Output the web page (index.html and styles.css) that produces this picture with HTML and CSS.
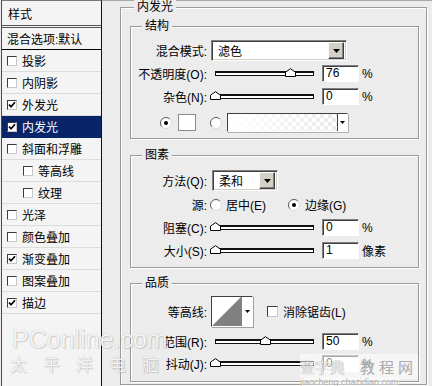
FILE: index.html
```html
<!DOCTYPE html>
<html>
<head>
<meta charset="utf-8">
<link rel="stylesheet" href="styles.css">
</head>
<body>
<div class="dialog">
  <div class="list">
    <div class="list-head">样式</div>
    <div class="list-blend">混合选项:默认</div>
    <div class="item"><span class="cb"></span>投影</div>
    <div class="item"><span class="cb"></span>内阴影</div>
    <div class="item"><span class="cb"><svg class="chk" width="8" height="8" viewBox="0 0 8 8"><path d="M1 3.5 L3 5.8 L7 1.2"/></svg></span>外发光</div>
    <div class="item sel"><span class="cb"><svg class="chk" width="8" height="8" viewBox="0 0 8 8"><path d="M1 3.5 L3 5.8 L7 1.2"/></svg></span>内发光</div>
    <div class="item"><span class="cb"></span>斜面和浮雕</div>
    <div class="item sub"><span class="cb"></span>等高线</div>
    <div class="item sub"><span class="cb"></span>纹理</div>
    <div class="item"><span class="cb"></span>光泽</div>
    <div class="item"><span class="cb"></span>颜色叠加</div>
    <div class="item"><span class="cb"><svg class="chk" width="8" height="8" viewBox="0 0 8 8"><path d="M1 3.5 L3 5.8 L7 1.2"/></svg></span>渐变叠加</div>
    <div class="item"><span class="cb"></span>图案叠加</div>
    <div class="item"><span class="cb"><svg class="chk" width="8" height="8" viewBox="0 0 8 8"><path d="M1 3.5 L3 5.8 L7 1.2"/></svg></span>描边</div>
  </div>

  <div class="main">
    <div class="group outer">
      <div class="title t-outer">内发光</div>

      <div class="group inner g-struct">
        <div class="title">结构</div>
        <div class="row r-sel1">
          <span class="lbl">混合模式:</span>
          <div class="select s-blend"><span class="val">滤色</span><span class="btn"><svg width="7" height="4" viewBox="0 0 7 4"><path d="M0 0H7L3.5 4Z"/></svg></span></div>
        </div>
        <div class="row r-s1">
          <span class="lbl">不透明度(O):</span>
          <div class="slider"><div class="track"></div><svg class="thumb" style="left:calc(76% - 5px)" width="11" height="9" viewBox="0 0 11 9"><path d="M0.5 8.5V4.2L5.5 0.7L10.5 4.2V8.5Z"/></svg></div>
          <div class="num">76</div><span class="unit">%</span>
        </div>
        <div class="row r-s2">
          <span class="lbl">杂色(N):</span>
          <div class="slider"><div class="track"></div><svg class="thumb" style="left:calc(0% - 5px)" width="11" height="9" viewBox="0 0 11 9"><path d="M0.5 8.5V4.2L5.5 0.7L10.5 4.2V8.5Z"/></svg></div>
          <div class="num">0</div><span class="unit">%</span>
        </div>
        <div class="row r-color">
          <svg class="radio rd-first" width="12" height="12" viewBox="0 0 12 12"><circle cx="6" cy="6" r="5.5" fill="#fff"/><path class="dk" d="M2.1 9.9A5.5 5.5 0 0 1 9.9 2.1"/><path class="lt" d="M9.9 2.1A5.5 5.5 0 0 1 2.1 9.9"/><circle cx="6" cy="6" r="2" fill="#000"/></svg>
          <div class="swatch"></div>
          <svg class="radio rd-second" width="12" height="12" viewBox="0 0 12 12"><circle cx="6" cy="6" r="5.5" fill="#fff"/><path class="dk" d="M2.1 9.9A5.5 5.5 0 0 1 9.9 2.1"/><path class="lt" d="M9.9 2.1A5.5 5.5 0 0 1 2.1 9.9"/></svg>
          <div class="grad"><div class="grad-fill"></div><div class="grad-arrow"><svg width="5" height="3" viewBox="0 0 5 3"><path d="M0 0H5L2.5 3Z"/></svg></div></div>
        </div>
      </div>

      <div class="group inner g-elem">
        <div class="title">图素</div>
        <div class="row r-sel2">
          <span class="lbl">方法(Q):</span>
          <div class="select s-method"><span class="val">柔和</span><span class="btn"><svg width="7" height="4" viewBox="0 0 7 4"><path d="M0 0H7L3.5 4Z"/></svg></span></div>
        </div>
        <div class="row r-src">
          <span class="lbl">源:</span>
          <label class="opt opt1"><svg class="radio" width="12" height="12" viewBox="0 0 12 12"><circle cx="6" cy="6" r="5.5" fill="#fff"/><path class="dk" d="M2.1 9.9A5.5 5.5 0 0 1 9.9 2.1"/><path class="lt" d="M9.9 2.1A5.5 5.5 0 0 1 2.1 9.9"/></svg>居中(E)</label>
          <label class="opt opt2"><svg class="radio" width="12" height="12" viewBox="0 0 12 12"><circle cx="6" cy="6" r="5.5" fill="#fff"/><path class="dk" d="M2.1 9.9A5.5 5.5 0 0 1 9.9 2.1"/><path class="lt" d="M9.9 2.1A5.5 5.5 0 0 1 2.1 9.9"/><circle cx="6" cy="6" r="2" fill="#000"/></svg>边缘(G)</label>
        </div>
        <div class="row r-s3">
          <span class="lbl">阻塞(C):</span>
          <div class="slider"><div class="track"></div><svg class="thumb" style="left:calc(0% - 5px)" width="11" height="9" viewBox="0 0 11 9"><path d="M0.5 8.5V4.2L5.5 0.7L10.5 4.2V8.5Z"/></svg></div>
          <div class="num">0</div><span class="unit">%</span>
        </div>
        <div class="row r-s4">
          <span class="lbl">大小(S):</span>
          <div class="slider"><div class="track"></div><svg class="thumb" style="left:calc(0% - 5px)" width="11" height="9" viewBox="0 0 11 9"><path d="M0.5 8.5V4.2L5.5 0.7L10.5 4.2V8.5Z"/></svg></div>
          <div class="num">1</div><span class="unit">像素</span>
        </div>
      </div>

      <div class="group inner g-qual">
        <div class="title">品质</div>
        <div class="row r-contour">
          <span class="lbl">等高线:</span>
          <div class="contour"><svg class="preview" width="29" height="29" viewBox="0 0 29 29"><polygon points="0,29 29,0 29,29" fill="#808080"/></svg><div class="c-arrow"><svg width="5" height="3" viewBox="0 0 5 3"><path d="M0 0H5L2.5 3Z"/></svg></div></div>
          <span class="cb cb-aa"></span><span class="aa-text">消除锯齿(L)</span>
        </div>
        <div class="row r-s5">
          <span class="lbl">范围(R):</span>
          <div class="slider"><div class="track"></div><svg class="thumb" style="left:calc(50% - 5px)" width="11" height="9" viewBox="0 0 11 9"><path d="M0.5 8.5V4.2L5.5 0.7L10.5 4.2V8.5Z"/></svg></div>
          <div class="num">50</div><span class="unit">%</span>
        </div>
        <div class="row r-s6">
          <span class="lbl">抖动(J):</span>
          <div class="slider"><div class="track"></div><svg class="thumb" style="left:calc(0% - 5px)" width="11" height="9" viewBox="0 0 11 9"><path d="M0.5 8.5V4.2L5.5 0.7L10.5 4.2V8.5Z"/></svg></div>
          <div class="num">0</div><span class="unit">%</span>
        </div>
      </div>
    </div>
  </div>

  <div class="wm-pc">PConline.com</div>
  <div class="wm-pc-cn">太平洋电脑</div>
  <div class="wm-cz"><span class="cz1">查字典</span><span class="cz2">教程网</span></div>
  <div class="wm-url">jiaocheng.chazidian.com</div>
</div>
</body>
</html>
```

FILE: styles.css
```css
* { box-sizing: border-box; }
html, body { margin: 0; padding: 0; }
body {
  width: 432px;
  height: 386px;
  overflow: hidden;
  background: #ececec;
  font-family: "Liberation Sans", "Noto Sans CJK SC", sans-serif;
  font-size: 12px;
  color: #000;
}
.dialog { position: relative; display: flex; height: 386px; overflow: hidden; }

/* ---------- style list ---------- */
.list {
  flex: none;
  width: 101px;
  margin-left: 1px;
  height: 386px;
  background: #f4f4f4;
  border-left: 1px solid #4a4a4a;
  border-right: 1px solid #111;
  border-top: 1px solid #777;
}
.list-head {
  height: 27px;
  padding-left: 6px;
  display: flex;
  align-items: center;
  border-bottom: 3px double #555;
}
.list-blend {
  height: 22px;
  padding-left: 5px;
  display: flex;
  align-items: center;
  border-bottom: 1px solid #000;
}
.item {
  height: 22px;
  display: flex;
  align-items: center;
  gap: 5px;
  padding-left: 5px;
  border-bottom: 1px solid #dcdcdc;
}
.item.sub { padding-left: 21px; }
.item.sel { background: #0a246a; color: #fff; border-bottom-color: #0a246a; }

.cb {
  flex: none;
  width: 10px;
  height: 10px;
  background: #fff;
  border: 1px solid;
  border-color: #3c3c3c #c8c8c8 #c8c8c8 #3c3c3c;
  display: flex;
  align-items: center;
  justify-content: center;
}
.chk path { fill: none; stroke: #000; stroke-width: 1.7; }

/* ---------- right side ---------- */
.main {
  flex: 1;
  height: 386px;
  border-top: 1px solid #a8a8a8;
  padding: 6px 5px 0 18px;
}
.group {
  border: 1px solid #9a9a9a;
  box-shadow: inset 1px 1px 0 #fff, 1px 1px 0 #fff;
}
.outer { height: 378px; padding: 0 7px 0 9px; }
.title {
  width: fit-content;
  height: 14px;
  line-height: 14px;
  margin: -8px 0 0 11px;
  padding: 0 3px;
  background: #ececec;
}
.t-outer { margin-left: 4px; }

.g-struct { margin-top: 12px; padding-bottom: 6px; }
.g-elem { margin-top: 16px; padding-bottom: 8px; }
.g-qual { margin-top: 15px; padding-bottom: 9px; }

.row { display: flex; align-items: center; height: 17px; }
.lbl { flex: none; width: 76px; text-align: right; white-space: nowrap; }

.r-sel1 { margin-top: 7px; height: 21px; }
.r-s1 { margin-top: 4px; }
.r-s2 { margin-top: 6px; }
.r-color { margin-top: 8px; height: 19px; }

.r-sel2 { margin-top: 8px; height: 21px; }
.r-src { margin-top: 5px; }
.r-s3 { margin-top: 6px; }
.r-s4 { margin-top: 6px; }

.r-contour { margin-top: 6px; height: 31px; }
.r-s5 { margin-top: 6px; }
.r-s6 { margin-top: 5px; }

/* dropdown */
.select {
  flex: none;
  height: 21px;
  display: flex;
  align-items: center;
  background: #fff;
  border: 1px solid;
  border-color: #808080 #fff #fff #808080;
  box-shadow: inset 1px 1px 0 #404040, inset -1px -1px 0 #d4d0c8;
  padding: 2px;
}
.s-blend { width: 136px; margin-left: 4px; }
.s-method { width: 66px; margin-left: 5px; }
.select .val { flex: 1; padding-left: 4px; }
.select .btn {
  width: 16px;
  height: 17px;
  background: #d4d0c8;
  border: 1px solid;
  border-color: #fff #404040 #404040 #fff;
  box-shadow: inset -1px -1px 0 #808080;
  display: flex;
  align-items: center;
  justify-content: center;
}

/* slider */
.slider {
  position: relative;
  flex: none;
  width: 99px;
  height: 17px;
  margin-left: 8px;
  display: flex;
  align-items: center;
}
.track {
  width: 100%;
  height: 5px;
  border: 1px solid #111;
  border-top-width: 2px;
  background: #fff;
}
.thumb { position: absolute; top: 3px; }
.thumb path { fill: #fff; stroke: #000; stroke-width: 1; }

.num {
  flex: none;
  width: 37px;
  height: 17px;
  margin-left: 8px;
  background: #fff;
  border: 1px solid;
  border-color: #808080 #fff #fff #808080;
  box-shadow: inset 1px 1px 0 #404040;
  padding-left: 3px;
  line-height: 15px;
}
.unit { margin-left: 3px; }

/* radios */
.radio { flex: none; }
.radio .dk { fill: none; stroke: #5a5a5a; stroke-width: 1; }
.radio .lt { fill: none; stroke: #d8d8d8; stroke-width: 1; }
.rd-first { margin-left: 29px; }
.rd-second { margin-left: 14px; }

.swatch {
  flex: none;
  width: 18px;
  height: 17px;
  margin-left: 6px;
  background: #fff;
  border: 1px solid #8a8a8a;
}
.grad {
  flex: none;
  width: 121px;
  height: 19px;
  margin-left: 5px;
  display: flex;
  border: 1px solid;
  border-color: #404040 #fff #fff #404040;
  box-shadow: 1px 1px 0 #b0b0b0;
}
.grad-fill {
  flex: 1;
  background:
    linear-gradient(to right, #fff 0%, rgba(255,255,255,0.55) 100%),
    repeating-conic-gradient(#cfcfcf 0 25%, #fff 0 50%) 0 0 / 8px 8px;
}
.grad-arrow {
  width: 10px;
  background: #fff;
  border-left: 1px solid #404040;
  display: flex;
  align-items: center;
  justify-content: center;
}

.opt { display: flex; align-items: center; gap: 4px; }
.opt1 { width: 78px; margin-left: 3px; }
.opt2 { gap: 5px; }

/* contour */
.contour {
  flex: none;
  width: 42px;
  height: 31px;
  margin-left: 4px;
  display: flex;
  background: #fff;
  border: 1px solid;
  border-color: #404040 #fff #fff #404040;
  box-shadow: 1px 1px 0 #a0a0a0;
}
.preview { display: block; }
.c-arrow {
  flex: 1;
  border-left: 1px solid #808080;
  display: flex;
  align-items: center;
  justify-content: center;
}
.cb-aa { width: 11px; height: 11px; margin-left: 14px; }
.aa-text { margin-left: 5px; }

/* watermarks (overlay) */
.wm-pc {
  position: absolute;
  left: 12px;
  top: 327px;
  font-family: "Liberation Sans", sans-serif;
  font-size: 25px;
  line-height: 25px;
  color: rgba(255,255,255,0.9);
  text-shadow: 0 0 1px rgba(0,0,0,0.3), 1px 1px 1px rgba(0,0,0,0.12);
}
.wm-pc-cn {
  position: absolute;
  left: 10px;
  top: 354px;
  font-family: "Noto Sans CJK SC", sans-serif;
  font-size: 17px;
  line-height: 19px;
  letter-spacing: 16px;
  color: rgba(255,255,255,0.9);
  text-shadow: 0 0 1px rgba(0,0,0,0.3), 1px 1px 1px rgba(0,0,0,0.12);
}
.wm-cz {
  position: absolute;
  left: 300px;
  top: 354px;
  width: 118px;
  height: 25px;
  background: rgba(255,255,255,0.55);
  display: flex;
  align-items: center;
  font-family: "Noto Sans CJK SC", sans-serif;
  font-size: 15px;
}
.cz1 { color: rgba(255,255,255,0.8); text-shadow: 0 0 1px #777; width: 60px; }
.cz2 { color: #a8a8a8; letter-spacing: 4px; }
.wm-url {
  position: absolute;
  left: 300px;
  top: 378px;
  font-family: "Liberation Sans", sans-serif;
  font-size: 9px;
  line-height: 8px;
  color: #b0b0b0;
  background: rgba(255,255,255,0.5);
}
```
